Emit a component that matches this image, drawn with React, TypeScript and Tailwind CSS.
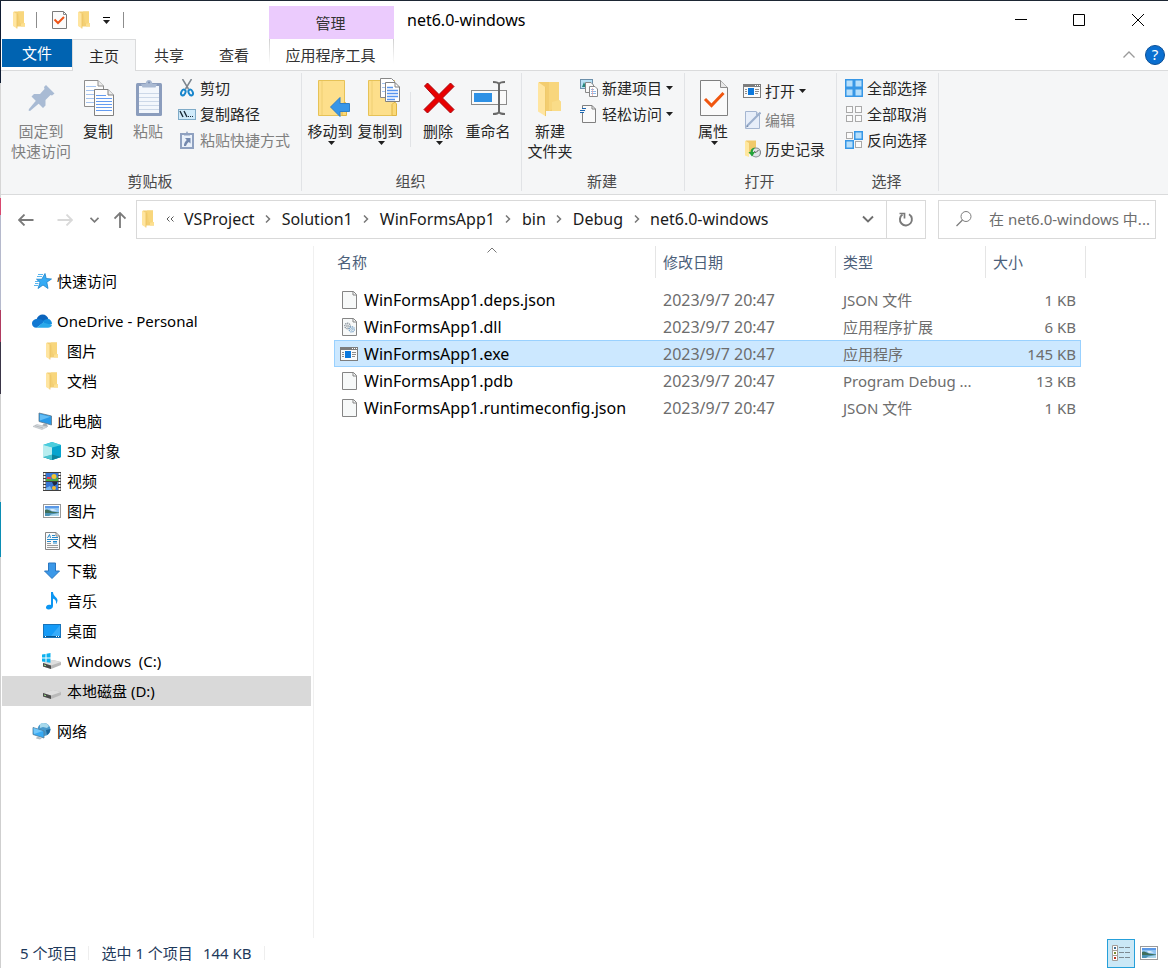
import React from "react";

type IconProps = { className?: string };

const svgProps = { fill: "none", xmlns: "http://www.w3.org/2000/svg", "aria-hidden": true } as const;

/* ---------- small shared icons ---------- */

function FolderIcon({ className = "w-3 h-[18px]" }: IconProps) {
  return (
    <svg {...svgProps} viewBox="0 0 12 18" className={className}>
      <path d="M1 0.5H11V12L12 12.5V15.5H1Z" fill="#f3cf74" />
      <path d="M5 0.5H11V12H7Z" fill="#f8d67c" />
      <path d="M8 15.5V12.5L11 12L12 12.5V15.5Z" fill="#fde08f" />
      <path d="M0 0.5L4 3V17.5L0 15Z" fill="#ffe5a0" />
      <path d="M4 3V17.5" stroke="#e9bd58" strokeWidth="0.7" />
    </svg>
  );
}

function CheckDocIcon({ className = "w-4 h-[18px]" }: IconProps) {
  return (
    <svg {...svgProps} viewBox="0 0 16 18" className={className}>
      <path d="M0.5 0.5H11.5L14.5 3.5V17.5H0.5Z" fill="#fbfbfb" stroke="#7b7b7b" />
      <path d="M11.5 0.5V3.5H14.5" stroke="#8a8a8a" />
      <path d="M2.5 8.5L6 12L12 6" stroke="#ee5316" strokeWidth="2" />
    </svg>
  );
}

function Triangle({ className = "w-[7px] h-1" }: IconProps) {
  return (
    <svg {...svgProps} viewBox="0 0 7 4" className={className}>
      <path d="M0 0H7L3.5 4Z" fill="#1f1f1f" />
    </svg>
  );
}

function PageIcon() {
  return (
    <svg {...svgProps} viewBox="0 0 16 18" className="h-[18px] w-4">
      <path d="M0.5 0.5H11.5L14.5 3.5V17.5H0.5Z" fill="#f7f9f9" stroke="#858585" />
      <path d="M11 0.5V4H14.5" stroke="#858585" />
    </svg>
  );
}

function DllIcon() {
  return (
    <svg {...svgProps} viewBox="0 0 16 18" className="h-[18px] w-4">
      <path d="M0.5 0.5H11.5L14.5 3.5V17.5H0.5Z" fill="#f7f9f9" stroke="#858585" />
      <path d="M11 0.5V4H14.5" stroke="#858585" />
      <circle cx="5.5" cy="8" r="2.7" stroke="#8b949c" strokeWidth="1.4" strokeDasharray="1.3 0.7" />
      <circle cx="5.5" cy="8" r="1" stroke="#8b949c" strokeWidth="0.8" />
      <circle cx="9.7" cy="11.3" r="2.6" stroke="#7ea6c8" strokeWidth="1.4" strokeDasharray="1.3 0.7" />
      <circle cx="9.7" cy="11.3" r="1" stroke="#7ea6c8" strokeWidth="0.8" />
    </svg>
  );
}

function AppIcon() {
  return (
    <svg {...svgProps} viewBox="0 0 18 14" className="h-[14px] w-[18px] shrink-0">
      <rect x="0.5" y="0.5" width="17" height="13" fill="#fafafa" stroke="#7d7d7d" />
      <path d="M0 0H18V3H0Z" fill="#7d7d7d" />
      <path d="M12 1.5H13M14 1.5H15M16 1.5H17" stroke="#fff" />
      <rect x="5" y="4" width="6" height="7" fill="#0c78dc" />
      <path d="M2 5.5H4M2 7.5H4M2 9.5H4M12 5.5H16M12 7.5H16M12 9.5H15" stroke="#8d8d8d" />
    </svg>
  );
}

function PictureIcon() {
  return (
    <svg {...svgProps} viewBox="0 0 18 14" className="h-[14px] w-[18px]">
      <rect x="0.5" y="0.5" width="17" height="13" fill="#fff" stroke="#9a9a9a" />
      <rect x="2" y="2" width="14" height="10" fill="#8fc4f2" />
      <path d="M2 2H16V4H2Z" fill="#5b98e6" />
      <path d="M2 6C4 4.500 6 6 9 7.500L16 8.500V9.500H2Z" fill="#3f6f5c" />
      <path d="M7 5.500C9 4.500 12 5.500 14 6.500L9 7Z" fill="#dcecf8" />
      <path d="M2 9H16V12H2Z" fill="#4b93b5" />
      <path d="M8 10.500L16 9V12H6Z" fill="#a9d4ea" />
    </svg>
  );
}

/* ---------- ribbon, large icons ---------- */

function PinIcon() {
  return (
    <svg {...svgProps} viewBox="0 0 40 40" className="size-10">
      <path d="M25 7L33.500 15.500L31 17.500L29.500 17L24.500 22L24.500 27.500L22 30L10.500 18.500L13 16L19 16L23.500 11L23 9Z" fill="#a9bbd4" />
      <path d="M15.500 22L18.500 25L9 33L7.500 32.500L8 31Z" fill="#a9bbd4" />
    </svg>
  );
}

function CopyIcon() {
  return (
    <svg {...svgProps} viewBox="0 0 40 40" className="size-10">
      <path d="M6.500 2.500H20L25.500 8V28.500H6.500Z" fill="#fdfdfd" stroke="#8e8e8e" />
      <path d="M20 2.500V8H25.500" fill="#ececec" stroke="#8e8e8e" />
      <path d="M8 8.500H18M8 12.500H22M8 16.500H17M8 20.500H17M8 24.500H17" stroke="#a5c4ef" />
      <path d="M16.500 11.500H30L35.500 17V37.500H16.500Z" fill="#fdfdfd" stroke="#808080" />
      <path d="M30 11.500V17H35.500" fill="#ececec" stroke="#808080" />
      <path d="M18 17.500H28M18 20.500H34M18 23.500H34M18 26.500H34M18 29.500H34M18 32.500H34" stroke="#639bf0" />
    </svg>
  );
}

function PasteIcon() {
  return (
    <svg {...svgProps} viewBox="0 0 40 40" className="size-10">
      <rect x="8" y="5" width="26" height="33" rx="1.500" fill="#8b9dbd" />
      <rect x="11" y="8" width="20" height="27" fill="#f3f7fc" />
      <path d="M11 15.500H31M11 19.500H31M11 23.500H31M11 27.500H31M11 31.500H31" stroke="#ccd8e8" />
      <path d="M13 6H17.500C18 3.500 19 2 21 2C23 2 24 3.500 24.500 6H29L27.500 9.500H14.500Z" fill="#a9b9d2" />
      <circle cx="21" cy="4.500" r="1" fill="#7e91b3" />
    </svg>
  );
}

function BigFolder() {
  return (
    <>
      <path d="M7.500 2.500H33.500V37.500H7.500Z" fill="#fddf8b" stroke="#e6c257" />
      <path d="M11 3V37" stroke="#efcf72" />
      <path d="M31 37.500V26.500L33 24.500H34.500L35.500 26V37.500Z" fill="#fbd978" stroke="#dfb544" />
    </>
  );
}

function MoveToIcon() {
  return (
    <svg {...svgProps} viewBox="-1 0 40 40" className="size-10">
      <BigFolder />
      <path d="M19.500 29L29 19.500V25.500H38.500V33.500H29V38.500Z" fill="#3796e8" stroke="#2f7fc8" />
    </svg>
  );
}

function CopyToIcon() {
  return (
    <svg {...svgProps} viewBox="-1 0 40 40" className="size-10">
      <BigFolder />
      <path d="M19.500 0.500H30.500L33.500 3.500V19.500H19.500Z" fill="#fff" stroke="#888" />
      <path d="M21 5.500H29M21 9.500H25M21 13.500H25" stroke="#a5c4ef" />
      <path d="M24.500 4.500H34L38.500 9V23.500H24.500Z" fill="#fff" stroke="#808080" />
      <path d="M34 4.500V9H38.500" stroke="#808080" />
      <path d="M26 9.500H32M26 12.500H37M26 15.500H37M26 18.500H37M26 21.500H34" stroke="#5795f0" strokeWidth="1.300" />
    </svg>
  );
}

function DeleteIcon() {
  return (
    <svg {...svgProps} viewBox="0 0 40 40" className="size-10">
      <path d="M6.500 8L9.500 5L21 16.500L32.500 5L36 8.500L24.500 20L36 31.500L32.500 35L21 23.500L9.500 35L6 31.500L17.500 20Z" fill="#e80000" stroke="#a8050d" />
    </svg>
  );
}

function RenameIcon() {
  return (
    <svg {...svgProps} viewBox="0 0 40 40" className="size-10">
      <rect x="3.500" y="12.500" width="35" height="14" fill="#fafafa" stroke="#8b8b8b" />
      <rect x="6" y="15" width="18" height="9" fill="#2e91e5" />
      <path d="M25 4C28 4 30 4 31 6C32 4 34 4 37 4M25 36C28 36 30 36 31 34C32 36 34 36 37 36M31 5V35" stroke="#696969" strokeWidth="2" />
    </svg>
  );
}

function NewFolderIcon() {
  return (
    <svg {...svgProps} viewBox="0 0 40 40" className="size-10">
      <path d="M9 4H29V22L31 24V33H9Z" fill="#f3cd70" />
      <path d="M19 4H29V22L25 30L19 33Z" fill="#f8d67c" />
      <path d="M22 33V24L29 22L31 24V33Z" fill="#fadc88" />
      <path d="M8 4L16 9.500V38.500L8 33.500Z" fill="#ffe5a0" />
      <path d="M15.500 9V38" stroke="#efca6b" />
    </svg>
  );
}

function PropertiesIcon() {
  return (
    <svg {...svgProps} viewBox="0 0 40 40" className="size-10">
      <path d="M7.500 2.500H27.500L34.500 9.500V37.500H7.500Z" fill="#fafafa" stroke="#808080" />
      <path d="M27.500 2.500V9.500H34.500" fill="#e8e8e8" stroke="#8c8c8c" />
      <path d="M12 21L18.500 27.500L30.500 15" stroke="#f0560f" strokeWidth="3" />
    </svg>
  );
}

/* ---------- ribbon, small icons ---------- */

const small = "size-[18px] shrink-0";

function CutIcon() {
  return (
    <svg {...svgProps} viewBox="0 0 18 18" className={small}>
      <path d="M4.500 0L10.500 10M13.500 0L7.500 10" stroke="#7c858e" strokeWidth="1.500" />
      <ellipse cx="5.300" cy="13.500" rx="2" ry="3" transform="rotate(25 5.300 13.500)" stroke="#1986cc" strokeWidth="2" />
      <ellipse cx="12.700" cy="13.500" rx="2" ry="3" transform="rotate(-25 12.700 13.500)" stroke="#1986cc" strokeWidth="2" />
    </svg>
  );
}

function PathIcon() {
  return (
    <svg {...svgProps} viewBox="0 0 18 18" className={small}>
      <rect x="0.500" y="4.500" width="17" height="10" fill="#cfeafa" stroke="#7fabc8" />
      <path d="M2 6L5 12M6 6L9 12" stroke="#1a2a38" strokeWidth="1.400" />
      <path d="M10 11.500H11M12 11.500H13M14 11.500H15" stroke="#1a2a38" />
    </svg>
  );
}

function PasteLinkIcon() {
  return (
    <svg {...svgProps} viewBox="0 0 18 18" className={small}>
      <path d="M3 3H15V17H3Z" fill="#eaf1fa" stroke="#8fa1c0" strokeWidth="2" />
      <path d="M6 3.500L8 2L9 0L10 2L12 3.500V4.500H6Z" fill="#8fa1c0" />
      <path d="M7 7H12.500V12.500L10.800 11C9.500 12 8.500 13.500 8 15H6C5.800 12.500 7 10.500 8.800 9Z" fill="#7489ae" />
    </svg>
  );
}

function NewItemIcon() {
  return (
    <svg {...svgProps} viewBox="0 0 18 18" className={small}>
      <rect x="0.500" y="0.500" width="12" height="9" fill="#b8e0f5" stroke="#6b8faa" />
      <path d="M2 8L4 3L6 8Z" fill="#26867b" />
      <path d="M5.500 3.500H11L13.500 6V13.500H5.500Z" fill="#f9f9f9" stroke="#888" />
      <path d="M9.500 7.500H15L17.500 10V17.500H9.500Z" fill="#fff" stroke="#888" />
      <path d="M11 10.500H14M11 12.500H16M11 14.500H16" stroke="#8fb8e8" />
      <path d="M12.500 9V17" stroke="#e5a0a0" strokeWidth="0.700" />
    </svg>
  );
}

function EasyAccessIcon() {
  return (
    <svg {...svgProps} viewBox="0 0 18 18" className={small}>
      <path d="M2.500 0.500H12L15.500 4V17.500H2.500Z" fill="#fafafa" stroke="#808080" />
      <path d="M12 0.500V4H15.500" stroke="#808080" />
      <path d="M2 3H6V8H0V5H2Z" fill="#f5f6f7" />
      <path d="M2 3.500H6M0 5.500H5M0 7.500H4" stroke="#1b66b0" strokeWidth="1.200" />
    </svg>
  );
}

function EditIcon() {
  return (
    <svg {...svgProps} viewBox="0 0 18 18" className={small}>
      <path d="M2.500 0.500H13L16.500 4V17.500H2.500Z" fill="#e7eef9" stroke="#a5b6d1" />
      <path d="M13.500 0.500V4H16.500" stroke="#a5b6d1" />
      <path d="M4 15L17.500 1.500" stroke="#9db0cd" strokeWidth="2.200" />
      <path d="M3 16.500L5.500 15.500L4 14Z" fill="#7085a6" />
    </svg>
  );
}

function HistoryIcon() {
  return (
    <svg {...svgProps} viewBox="0 0 18 18" className={small}>
      <path d="M3 0.500H13V14H3Z" fill="#f0c96a" />
      <path d="M2 0.500L6 3V17L2 15.500Z" fill="#ffe79f" />
      <circle cx="13" cy="12.500" r="4.500" fill="#dfe4e6" stroke="#858b8f" strokeWidth="1.200" />
      <path d="M13 12.500L15.500 10M13 12.500L11 11.500" stroke="#555" />
      <path d="M11.500 7.500C8.500 8 7.500 10 7.500 12H5.500L9 16.500L12 12H9.800C9.800 10.500 10.500 9 11.500 8.500Z" fill="#24a33a" />
    </svg>
  );
}

function cells(filled: boolean[]) {
  return filled.map((on, i) => {
    const x = i % 2 ? 9 : 0;
    const y = i > 1 ? 9 : 0;
    return on ? (
      <rect key={i} x={x + 0.75} y={y + 0.75} width="7.500" height="7.500" fill="#b7dffb" stroke="#3797e6" strokeWidth="1.500" />
    ) : (
      <rect key={i} x={x + 1.5} y={y + 1.5} width="6" height="6" fill="#fbfbfb" stroke="#a9a9a9" />
    );
  });
}

function SelectIcon({ filled }: { filled: boolean[] }) {
  return (
    <svg {...svgProps} viewBox="0 0 18 18" className={small}>
      {cells(filled)}
    </svg>
  );
}

/* ---------- navigation tree icons ---------- */

function StarIcon() {
  return (
    <svg {...svgProps} viewBox="0 0 20 18" className="h-[18px] w-5">
      <path d="M13 1.500L14.200 6.500L19.500 7L14.800 10.200L16 16.500L11 13L6 16.500L8 10.500L4.500 7.200H9.800Z" fill="#35abf5" stroke="#1c82c9" strokeWidth="0.800" />
      <path d="M6 2.500H11M5 4.500H10M3 9.500H7M3 11.500H6.500M2 13.500H6" stroke="#59b5ee" />
    </svg>
  );
}

function CloudIcon() {
  return (
    <svg {...svgProps} viewBox="0 0 20 14" className="h-[14px] w-5">
      <path d="M4.500 5.500C5.500 2 8 0.500 10.500 0.500C13.500 0.500 16 2.500 16.500 5.500L9 9Z" fill="#0b64bd" />
      <path d="M4.800 5C2 5 0 7.200 0 9.500C0 12 1.800 13.700 4.500 13.700L13 7.500C10 5.500 7.500 4.800 4.800 5Z" fill="#1178d2" />
      <path d="M16 5C13.500 5 12 6.200 10.500 7.500L15 12L20 10C20 7 18 5 16 5Z" fill="#1590df" />
      <path d="M4.500 13.700L11 8.500L20 11C19.500 12.700 18 13.700 16 13.700Z" fill="#29a9ea" />
    </svg>
  );
}

function PcIcon() {
  return (
    <svg {...svgProps} viewBox="0 0 20 18" className="h-[18px] w-5">
      <path d="M7 1L19.500 4V13L7 9.500Z" fill="#2899e8" stroke="#60788c" strokeWidth="0.800" />
      <path d="M8 2.200L18.500 4.800L8 8.500Z" fill="#63bdf5" />
      <path d="M12 11.500L15 12.300L16 15L10 13.500Z" fill="#a5adb4" />
      <path d="M5 12.500L15 15L10 17.500L1 14.500Z" fill="#d6dadd" stroke="#b2b8bd" strokeWidth="0.600" />
      <path d="M3 13.700L11 16" stroke="#9da4aa" strokeWidth="0.600" />
    </svg>
  );
}

function CubeIcon() {
  return (
    <svg {...svgProps} viewBox="0 0 18 18" className="size-[18px]">
      <path d="M0 3L9 0L18 3V15L9 18L0 15Z" fill="#1cb2cf" />
      <path d="M0 3L9 5.500V18L0 15Z" fill="#8ce2ea" />
      <path d="M9 5.500L18 3V15L9 18Z" fill="#07a4ce" />
      <path d="M0 3L9 0L18 3L9 5.500Z" fill="#4bcddd" />
      <path d="M0 15L9 12.500L18 15L9 18Z" fill="#0d829c" />
      <path d="M0 15L9 12.500V18Z" fill="#49c3cf" />
      <path d="M0 3L9 5.500V12.500L0 15Z" fill="#b8edef" />
    </svg>
  );
}

function VideoIcon() {
  return (
    <svg {...svgProps} viewBox="0 0 18 19" className="h-[19px] w-[18px]">
      <path d="M0 0H18V19H0Z" fill="#3f3f3f" />
      <path d="M3 1H15V9H3ZM3 10H15V18H3Z" fill="#3676d5" />
      <path d="M1.500 1V19M16.500 1V19" stroke="#fff" strokeWidth="2" strokeDasharray="2 1" />
      <path d="M3 7L6 5L10 8L15 5V9H3Z" fill="#4dae43" />
      <circle cx="11" cy="4.500" r="2.500" fill="#f1c62f" />
      <path d="M4 5H8V7H4Z" fill="#e34250" />
      <path d="M9 10H14V12L11 14Z" fill="#1f2c45" />
      <circle cx="11" cy="16" r="2" fill="#f1b72f" />
      <path d="M3 16L7 14L9 18H3Z" fill="#78b7ef" />
    </svg>
  );
}

function DocumentIcon() {
  return (
    <svg {...svgProps} viewBox="0 0 18 18" className="size-[18px]">
      <path d="M2.500 0.500H13L16.500 4V17.500H2.500Z" fill="#fafafa" stroke="#858585" />
      <path d="M13 0.500V4H16.500" stroke="#858585" />
      <path d="M4.500 6L6.500 2.500L7.500 6" stroke="#268acc" />
      <path d="M9 3.500H12M9 5.500H15M4 7.500H15M4 9.500H8M10 9.500H14M10 11H14" stroke="#268acc" />
      <path d="M4 11.500H8M4 13.500H15M4 15.500H15" stroke="#9a9a9a" />
    </svg>
  );
}

function DownloadIcon() {
  return (
    <svg {...svgProps} viewBox="0 0 18 18" className="size-[18px]">
      <path d="M5.500 1H12.500V9H16.500L9 16.500L1.500 9H5.500Z" fill="#3b98e8" stroke="#2a76c0" />
    </svg>
  );
}

function MusicIcon() {
  return (
    <svg {...svgProps} viewBox="0 0 18 18" className="size-[18px]">
      <path d="M8 0H10C10 4 14 5 14.500 8C14.500 9.500 14 11 13 12C13.500 8.500 12 7.500 10 6.500V14C10 16 8 17.500 5.500 17.500C2 17.500 2.500 13.500 5 13C6.500 12.500 7.500 12.800 8 13Z" fill="#0c96f2" />
    </svg>
  );
}

function DesktopIcon() {
  return (
    <svg {...svgProps} viewBox="0 0 18 14" className="h-[14px] w-[18px]">
      <rect x="0.500" y="0.500" width="17" height="13" fill="#159bf7" stroke="#1874ba" />
      <path d="M8 12L17 1V12Z" fill="#38acfa" />
      <path d="M1 12.500H17" stroke="#0a578f" />
      <path d="M2 12.500H3M13 12.500H14M15 12.500H16" stroke="#fff" />
    </svg>
  );
}

function DriveShape() {
  return (
    <>
      <path d="M1 11L11 8L19 10V13L9 17L1 14.500Z" fill="#b9b9b9" />
      <path d="M1 11L11 8L19 10L9 13.500Z" fill="#dedede" />
      <path d="M1 11L9 13.500V17L1 14.500Z" fill="#4b4b4b" />
      <path d="M2 13L4 13.700" stroke="#9fe48e" />
    </>
  );
}

function SystemDriveIcon() {
  return (
    <svg {...svgProps} viewBox="0 0 19 18" className="h-[18px] w-[19px]">
      <DriveShape />
      <path d="M0 2.500L3.500 2V5.500H0ZM4.500 1.800L8.500 1V5.500H4.500ZM0 6.500H3.500V10L0 9.500ZM4.500 6.500H8.500V10.700L4.500 10.200Z" fill="#0db1ef" />
    </svg>
  );
}

function DriveIcon() {
  return (
    <svg {...svgProps} viewBox="0 0 19 18" className="h-[18px] w-[19px]">
      <DriveShape />
    </svg>
  );
}

function NetworkIcon() {
  return (
    <svg {...svgProps} viewBox="0 0 20 18" className="h-[18px] w-5">
      <circle cx="12" cy="7.500" r="6.500" fill="#4899cb" />
      <path d="M8 2C11 0 15 1 17 4L15 6L11 5L8 6Z" fill="#a7d9ec" />
      <path d="M14 8L18.500 7C18 10 17 12 15 13Z" fill="#1b679c" />
      <path d="M1 5.500L12 9V16L1 12.500Z" fill="#38aaf3" stroke="#527b96" strokeWidth="0.800" />
      <path d="M1.500 6L11 9L2 12Z" fill="#72c7fa" />
      <path d="M5 14.500L10 16L8 17.500L4 16.500Z" fill="#b5bdc2" />
    </svg>
  );
}

/* ---------- ribbon pieces ---------- */

function Group({ title, width, children }: { title: string; width: string; children: React.ReactNode }) {
  return (
    <section className={`flex shrink-0 flex-col border-r border-[#e1e3e6] ${width}`} aria-label={title}>
      <div className="flex h-[98px] items-start">{children}</div>
      <div className="pr-0.5 text-center leading-5 text-[#4a4a4a]">{title}</div>
    </section>
  );
}

function LargeButton({ icon, lines, menu, disabled, width = "w-[50px]" }: {
  icon: React.ReactNode; lines: string[]; menu?: boolean; disabled?: boolean; width?: string;
}) {
  return (
    <button disabled={disabled} className={`flex shrink-0 flex-col items-center pt-[5px] disabled:text-[#808080] ${width}`}>
      {icon}
      <span className="mt-[3px] flex flex-col whitespace-nowrap leading-5">
        {lines.map((line) => <span key={line}>{line}</span>)}
      </span>
      {menu && <Triangle className="ml-0.5 h-1 w-[7px]" />}
    </button>
  );
}

function SmallButton({ icon, label, menu, disabled, height = "h-[26px]" }: {
  icon: React.ReactNode; label: string; menu?: boolean; disabled?: boolean; height?: string;
}) {
  return (
    <button disabled={disabled} className={`flex items-center gap-1 whitespace-nowrap disabled:text-[#808080] ${height}`}>
      {icon}
      <span>{label}</span>
      {menu && <Triangle />}
    </button>
  );
}

/* ---------- data ---------- */

type Node = { label: string; icon: React.ReactNode; selected?: boolean };
const tree: { root: Node; children: Node[] }[] = [
  { root: { label: "快速访问", icon: <StarIcon /> }, children: [] },
  {
    root: { label: "OneDrive - Personal", icon: <CloudIcon /> },
    children: [
      { label: "图片", icon: <FolderIcon /> },
      { label: "文档", icon: <FolderIcon /> },
    ],
  },
  {
    root: { label: "此电脑", icon: <PcIcon /> },
    children: [
      { label: "3D 对象", icon: <CubeIcon /> },
      { label: "视频", icon: <VideoIcon /> },
      { label: "图片", icon: <PictureIcon /> },
      { label: "文档", icon: <DocumentIcon /> },
      { label: "下载", icon: <DownloadIcon /> },
      { label: "音乐", icon: <MusicIcon /> },
      { label: "桌面", icon: <DesktopIcon /> },
      { label: "Windows  (C:)", icon: <SystemDriveIcon /> },
      { label: "本地磁盘 (D:)", icon: <DriveIcon />, selected: true },
    ],
  },
  { root: { label: "网络", icon: <NetworkIcon /> }, children: [] },
];

const files = [
  { name: "WinFormsApp1.deps.json", type: "JSON 文件", size: "1 KB", icon: <PageIcon /> },
  { name: "WinFormsApp1.dll", type: "应用程序扩展", size: "6 KB", icon: <DllIcon /> },
  { name: "WinFormsApp1.exe", type: "应用程序", size: "145 KB", icon: <AppIcon />, selected: true },
  { name: "WinFormsApp1.pdb", type: "Program Debug ...", size: "13 KB", icon: <PageIcon /> },
  { name: "WinFormsApp1.runtimeconfig.json", type: "JSON 文件", size: "1 KB", icon: <PageIcon /> },
];

const crumbs = ["VSProject", "Solution1", "WinFormsApp1", "bin", "Debug", "net6.0-windows"];

/* ---------- sections ---------- */

function TitleBar() {
  return (
    <header className="flex">
      <div className="flex w-[268px] shrink-0 flex-col">
        <div className="flex h-[38px] items-center pl-3">
          <button aria-label="窗口菜单"><FolderIcon /></button>
          <span className="ml-[11px] h-4 w-px bg-[#8c8c8c]" />
          <button className="ml-[15px]" aria-label="属性"><CheckDocIcon /></button>
          <button className="ml-[10px]" aria-label="新建文件夹"><FolderIcon /></button>
          <button className="ml-[13px] flex flex-col items-center gap-0.5" aria-label="自定义快速访问工具栏">
            <span className="h-px w-[7px] bg-black" />
            <Triangle />
          </button>
          <span className="ml-[13px] h-4 w-px bg-[#8c8c8c]" />
        </div>
        <div className="flex h-[31px]">
          <button className="ml-px h-7 w-[70px] bg-[#0063b1] pb-px text-white">文件</button>
          <button className="relative z-10 -mb-px w-16 border border-b-0 border-[#dadbdc] bg-[#f5f6f7] text-[#262626]">主页</button>
          <button className="w-[66px] text-[#333]">共享</button>
          <button className="w-16 text-[#333]">查看</button>
        </div>
      </div>
      <div className="flex w-[125px] shrink-0 flex-col pt-[5px]">
        <div className="flex h-[33px] items-center justify-center bg-[#ebcbfd] pr-0.5 text-[#333]">管理</div>
        <button className="h-[31px] bg-[linear-gradient(#cfcfcf,#fff_80%),linear-gradient(#cfcfcf,#fff_80%)] bg-[length:1px_100%] bg-[position:0_0,100%_0] bg-no-repeat pr-0.5 text-[#333]">
          应用程序工具
        </button>
      </div>
      <div className="flex min-w-0 flex-1 flex-col">
        <div className="flex h-[38px] items-center pl-[13px]">
          <h1 className="text-[16px] text-black">net6.0-windows</h1>
          <div className="ml-auto flex">
            <button className="flex w-[58px] justify-center" aria-label="最小化">
              <svg {...svgProps} viewBox="0 0 12 12" className="size-3"><path d="M0 5.500H12" stroke="#000" /></svg>
            </button>
            <button className="flex w-[58px] justify-center" aria-label="最大化">
              <svg {...svgProps} viewBox="0 0 12 12" className="size-3"><path d="M0.500 0.500H11.500V11.500H0.500Z" stroke="#000" /></svg>
            </button>
            <button className="flex w-[60px] justify-center" aria-label="关闭">
              <svg {...svgProps} viewBox="0 0 12 12" className="size-3"><path d="M0 0L12 12M12 0L0 12" stroke="#000" /></svg>
            </button>
          </div>
        </div>
        <div className="flex h-[31px] items-center justify-end gap-[10px] pr-[3px]">
          <button aria-label="最小化功能区">
            <svg {...svgProps} viewBox="0 0 12 7" className="h-[7px] w-3"><path d="M0.500 6.500L6 1L11.500 6.500" stroke="#9a9a9a" strokeWidth="1.300" /></svg>
          </button>
          <button className="flex size-5 items-center justify-center rounded-full border border-[#0b4f96] bg-[#0b6fd0] text-[15px] leading-none text-white">?</button>
        </div>
      </div>
    </header>
  );
}

function Ribbon() {
  return (
    <div className="flex border-y border-[#dadbdc] bg-[#f5f6f7] pt-0.5 pb-[3px] text-[#262626]">
      <Group title="剪贴板" width="w-[301px]">
        <div className="flex pl-2">
          <LargeButton icon={<PinIcon />} lines={["固定到", "快速访问"]} disabled width="w-16 text-center" />
          <LargeButton icon={<CopyIcon />} lines={["复制"]} />
          <LargeButton icon={<PasteIcon />} lines={["粘贴"]} disabled />
          <div className="flex flex-col pt-0.5 pl-[5px]">
            <SmallButton icon={<CutIcon />} label="剪切" />
            <SmallButton icon={<PathIcon />} label="复制路径" />
            <SmallButton icon={<PasteLinkIcon />} label="粘贴快捷方式" disabled />
          </div>
        </div>
      </Group>
      <Group title="组织" width="w-[220px]">
        <div className="flex pl-[3px]">
          <LargeButton icon={<MoveToIcon />} lines={["移动到"]} menu />
          <LargeButton icon={<CopyToIcon />} lines={["复制到"]} menu />
          <span className="mt-[19px] mr-0.5 ml-[5px] h-[55px] w-px bg-[#e1e3e6]" />
          <LargeButton icon={<DeleteIcon />} lines={["删除"]} menu />
          <LargeButton icon={<RenameIcon />} lines={["重命名"]} />
        </div>
      </Group>
      <Group title="新建" width="w-[163px]">
        <div className="flex pl-[3px]">
          <LargeButton icon={<NewFolderIcon />} lines={["新建", "文件夹"]} width="w-[50px] text-center" />
          <div className="flex flex-col pt-0.5 pl-[5px]">
            <SmallButton icon={<NewItemIcon />} label="新建项目" menu />
            <SmallButton icon={<EasyAccessIcon />} label="轻松访问" menu />
          </div>
        </div>
      </Group>
      <Group title="打开" width="w-[152px]">
        <div className="flex pl-[3px]">
          <LargeButton icon={<PropertiesIcon />} lines={["属性"]} menu />
          <div className="flex flex-col pt-[3px] pl-[5px]">
            <SmallButton icon={<AppIcon />} label="打开" menu height="h-[29px]" />
            <SmallButton icon={<EditIcon />} label="编辑" disabled height="h-[29px]" />
            <SmallButton icon={<HistoryIcon />} label="历史记录" height="h-[29px]" />
          </div>
        </div>
      </Group>
      <Group title="选择" width="w-[102px]">
        <div className="flex flex-col pt-0.5 pl-2">
          <SmallButton icon={<SelectIcon filled={[true, true, true, true]} />} label="全部选择" />
          <SmallButton icon={<SelectIcon filled={[false, false, false, false]} />} label="全部取消" />
          <SmallButton icon={<SelectIcon filled={[false, true, true, false]} />} label="反向选择" />
        </div>
      </Group>
    </div>
  );
}

function AddressRow() {
  return (
    <div className="flex items-center pt-[5px] pr-3">
      <div className="flex w-[135px] shrink-0 items-center pl-[17px]">
        <button aria-label="后退">
          <svg {...svgProps} viewBox="0 0 16 12" className="h-3 w-4"><path d="M6.500 0.500L1 6L6.500 11.500M1 6H15.500" stroke="#7a7a7a" strokeWidth="1.800" /></svg>
        </button>
        <button className="ml-[23px]" aria-label="前进" disabled>
          <svg {...svgProps} viewBox="0 0 16 12" className="h-3 w-4"><path d="M9.500 0.500L15 6L9.500 11.500M15 6H0.500" stroke="#d9d9d9" strokeWidth="1.800" /></svg>
        </button>
        <button className="ml-[17px]" aria-label="最近浏览的位置">
          <svg {...svgProps} viewBox="0 0 9 6" className="h-[6px] w-[9px]"><path d="M0.500 0.800L4.500 4.800L8.500 0.800" stroke="#7a7a7a" strokeWidth="1.700" /></svg>
        </button>
        <button className="ml-[15px]" aria-label="上移">
          <svg {...svgProps} viewBox="0 0 12 16" className="h-4 w-3"><path d="M0.500 6.500L6 1L11.500 6.500M6 1V16" stroke="#7a7a7a" strokeWidth="1.800" /></svg>
        </button>
      </div>
      <div className="flex h-[39px] min-w-0 flex-1 border border-[#d9d9d9] bg-white">
        <div className="flex min-w-0 flex-1 items-center pb-0.5 pl-[5px]">
          <FolderIcon />
          <svg {...svgProps} viewBox="0 0 8 6" className="mr-[10px] ml-3 h-[6px] w-2"><path d="M3.500 0.500L1 3L3.500 5.500M7.500 0.500L5 3L7.500 5.500" stroke="#5a5a5a" /></svg>
          {crumbs.map((crumb, i) => (
            <React.Fragment key={crumb}>
              {i > 0 && (
                <span className="flex w-[27px] justify-center">
                  <svg {...svgProps} viewBox="0 0 6 8" className="h-2 w-[6px]"><path d="M1 0.500L4.500 4L1 7.500" stroke="#777" strokeWidth="1.500" /></svg>
                </span>
              )}
              <a href="#" className="text-[16px] text-[#1a1a1a]">{crumb}</a>
            </React.Fragment>
          ))}
          <button className="mr-3 ml-auto" aria-label="以前的位置">
            <svg {...svgProps} viewBox="0 0 12 8" className="h-2 w-3"><path d="M1 1.500L6 6.500L11 1.500" stroke="#6e6e6e" strokeWidth="1.900" /></svg>
          </button>
        </div>
        <button className="flex w-[39px] items-center justify-center border-l border-[#d9d9d9]" aria-label="刷新">
          <svg {...svgProps} viewBox="0 0 16 16" className="size-4">
            <path d="M11 2.300A6 6 0 1 1 4.500 2.500" stroke="#7a7a7a" strokeWidth="1.900" />
            <path d="M1.500 1.500H6.500V6.500" stroke="#7a7a7a" strokeWidth="1.700" />
          </svg>
        </button>
      </div>
      <label className="ml-3 flex h-[39px] w-[218px] shrink-0 items-center border border-[#d9d9d9] bg-white pb-0.5 pl-[17px]">
        <svg {...svgProps} viewBox="0 0 16 16" className="size-4 shrink-0">
          <circle cx="10" cy="5.500" r="5" stroke="#7d7d7d" />
          <path d="M6.500 9L0.500 15" stroke="#7d7d7d" strokeWidth="1.200" />
        </svg>
        <input
          type="text"
          aria-label="搜索"
          placeholder="在 net6.0-windows 中..."
          className="ml-[17px] min-w-0 flex-1 bg-transparent outline-none placeholder:text-[#6d6d6d]"
        />
      </label>
    </div>
  );
}

function NavigationPane() {
  return (
    <nav className="mt-[7px] w-[313px] shrink-0 border-r border-[#f0f0f0] pt-5" aria-label="导航窗格">
      <ul className="flex flex-col gap-[10px]">
        {tree.map(({ root, children }) => (
          <li key={root.label}>
            <button className="flex h-[30px] w-full items-center pl-[31px] text-black">
              <span className="flex w-[25px]">{root.icon}</span>
              {root.label}
            </button>
            {children.length > 0 && (
              <ul>
                {children.map((child) => (
                  <li key={child.label} className={child.selected ? "mr-0.5 ml-px bg-[#d9d9d9] pl-[39px]" : "pl-10"}>
                    <button className="flex h-[30px] w-full items-center whitespace-pre text-black">
                      <span className="mr-[5px] flex w-[21px] justify-center">{child.icon}</span>
                      {child.label}
                    </button>
                  </li>
                ))}
              </ul>
            )}
          </li>
        ))}
      </ul>
    </nav>
  );
}

const headCell = "relative p-0 pb-2 text-left font-normal";
const headInner = "flex h-8 w-full items-center border-r border-[#e5e5e5] text-[#4c607a]";

function FileTable() {
  return (
    <main className="min-w-0 flex-1 overflow-hidden pt-[7px] pl-5">
      <table className="w-[752px] table-fixed border-separate border-spacing-0">
        <colgroup>
          <col className="w-[322px]" />
          <col className="w-[180px]" />
          <col className="w-[150px]" />
          <col className="w-[95px]" />
          <col className="w-[5px]" />
        </colgroup>
        <thead>
          <tr>
            <th className={headCell}>
              <button className={`pl-[3px] ${headInner}`}>名称</button>
              <svg {...svgProps} viewBox="0 0 10 6" className="absolute top-px left-[153px] h-[6px] w-[10px]">
                <path d="M0.500 5.500L5 1L9.500 5.500" stroke="#777" />
              </svg>
            </th>
            <th className={headCell}><button className={`pl-[7px] ${headInner}`}>修改日期</button></th>
            <th className={headCell}><button className={`pl-[7px] ${headInner}`}>类型</button></th>
            <th colSpan={2} className={headCell}><button className={`pl-[7px] ${headInner}`}>大小</button></th>
          </tr>
        </thead>
        <tbody>
          {files.map((file) => {
            const cell = file.selected
              ? "h-[27px] border-y border-[#99d1ff] bg-[#cce8ff] p-0 whitespace-nowrap"
              : "h-[27px] p-0 whitespace-nowrap";
            return (
              <tr key={file.name} className="leading-[22px] text-[#6d6d6d]">
                <td className={`${cell} ${file.selected ? "border-l" : ""}`}>
                  <div className={`flex items-center text-[16px] text-black ${file.selected ? "pl-[5px]" : "pl-2"}`}>
                    <span className="mr-[6px]">{file.icon}</span>
                    {file.name}
                  </div>
                </td>
                <td className={`${cell} pl-[7px] text-[16px]`}>2023/9/7 20:47</td>
                <td className={`${cell} pl-[7px]`}>{file.type}</td>
                <td className={`${cell} text-right ${file.selected ? "border-r pr-1" : "pr-[5px]"}`}>{file.size}</td>
                <td className="p-0" />
              </tr>
            );
          })}
        </tbody>
      </table>
    </main>
  );
}

function StatusBar() {
  return (
    <footer className="flex h-[30px] items-center pr-[10px] pl-[19px] text-[#1e395b]">
      <span>5 个项目</span>
      <span className="mr-3 ml-[11px] h-[14px] w-px bg-[#eeeeee]" />
      <span>选中 1 个项目</span>
      <span className="ml-[10px]">144 KB</span>
      <span className="ml-3 h-[14px] w-px bg-[#eeeeee]" />
      <button className="ml-auto flex h-[29px] w-7 items-center justify-center border border-[#26a0da] bg-[#cbe8f6]" aria-label="详细信息">
        <svg {...svgProps} viewBox="0 0 18 16" className="h-4 w-[18px]">
          <path d="M0.500 0.500H5.500V5.500H0.500ZM0.500 5.500H5.500V10.500H0.500ZM0.500 10.500H5.500V15.500H0.500Z" fill="#fff" stroke="#a39c97" />
          <path d="M2 2H4V4H2Z" fill="#3f6e91" />
          <path d="M2 7H4V9H2Z" fill="#7c8d34" />
          <path d="M2 12H4V14H2Z" fill="#bb3421" />
          <path d="M7 2.500H12M13 2.500H18M7 7.500H12M13 7.500H18M7 12.500H12M13 12.500H18" stroke="#7d8a92" />
        </svg>
      </button>
      <button className="ml-[5px] flex w-[18px] justify-center" aria-label="大缩略图"><PictureIcon /></button>
    </footer>
  );
}

export default function App() {
  return (
    <div className="flex min-h-screen border-t border-[#1d2734] bg-white font-['Noto_Sans','Noto_Sans_CJK_SC',sans-serif] text-[15px] leading-5">
      <div className="w-px shrink-0 bg-[linear-gradient(#0f1c33_82px,#d6d6d6_82px_197px,#d8486f_197px_214px,#b5b9cc_214px_309px,#b03a60_309px_341px,#3a3547_341px_393px,#cfcfcf_393px_501px,#0b8db4_501px_556px,#cfcfcf_556px)]" />
      <div className="flex min-w-0 flex-1 flex-col">
        <TitleBar />
        <Ribbon />
        <AddressRow />
        <div className="flex flex-1">
          <NavigationPane />
          <FileTable />
        </div>
        <StatusBar />
      </div>
    </div>
  );
}
